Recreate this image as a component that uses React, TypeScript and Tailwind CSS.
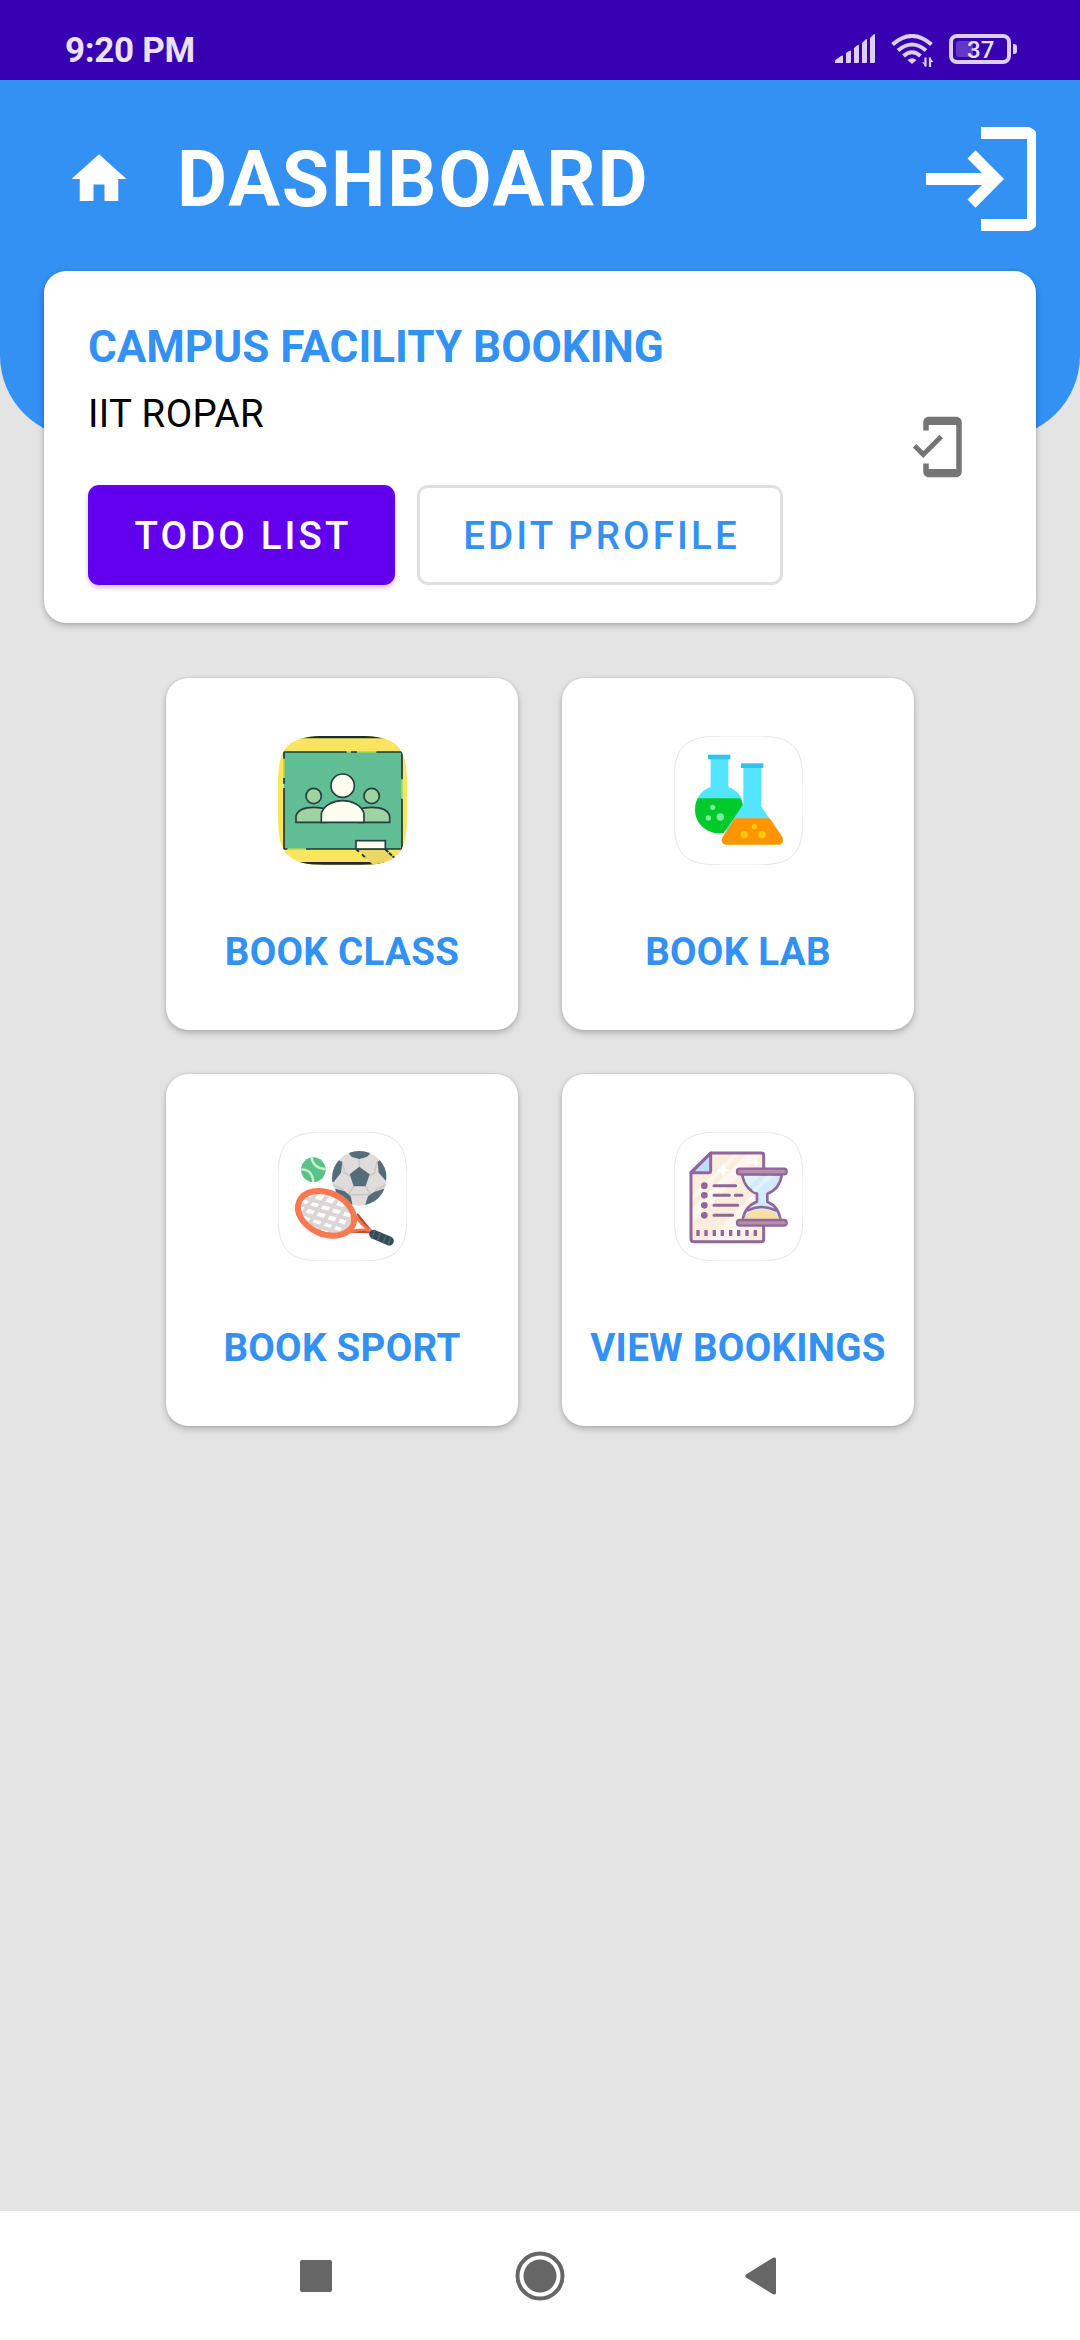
import type { ReactNode } from "react";

const SQUIRCLE =
  "M0 140C0 32 32 0 140 0H247C355 0 387 32 387 140V247C387 355 355 387 247 387H140C32 387 0 355 0 247Z";

function StatusBar() {
  return (
    <header className="flex h-[80px] shrink-0 items-start justify-between bg-[#3700b3] pr-[63px] pl-[65px]">
      <span className="mt-[30px] text-[35px] leading-[41px] font-bold tracking-[-0.3px] text-[#ebe2f9]">9:20 PM</span>
      <div className="mt-[34px] flex items-start text-[#dccff3]">
        <svg width="42" height="30" viewBox="0 0 42 30" fill="currentColor">
          <path d="M0 29V27Q0 26 1 25.4L6 22Q8 21 8 22V29ZM11 29V19L14 17Q16 16 16 17V28Q16 29 15 29ZM19 29V14L22 11.5Q24 10 24 12V28Q24 29 23 29ZM27 29V9L30 6Q32 4 32 6V28Q32 29 31 29ZM35 29V4L38 1Q40 -1 40 1V28Q40 29 39 29Z" />
        </svg>
        <svg className="ml-[14px]" width="44" height="34" viewBox="0 0 44 34" fill="none" stroke="currentColor" strokeWidth="4">
          <path d="M1.5 10.5Q21 -6.500 40.500 10.500" />
          <path d="M7 16.500Q21 4.500 35 16.500" />
          <path d="M12.500 22Q21 14.500 29.500 22" />
          <path d="M16.500 26Q21 22.500 25.500 26L21 30Z" fill="currentColor" stroke="none" />
          <path d="M34.500 23.500V32.500M39 23.500V33" strokeWidth="2.200" />
          <path d="M31 28L35 33V29ZM42.500 28L38.500 23.500V28Z" fill="currentColor" stroke="none" />
        </svg>
        <div className="ml-[14px] flex items-center">
          <div className="flex h-[30px] w-[62px] items-center rounded-[8px] border-4 border-[#dccff3] pl-[3px]">
            <div className="h-[16px] w-[17px] rounded-l-[3px] bg-[#6236c6]" />
            <span className="-ml-[6px] pt-[2px] text-[24px] leading-[24px] font-medium text-[#ebe2f9]">37</span>
          </div>
          <div className="ml-[2px] h-[10px] w-[4px] rounded-r-[3px] bg-[#dccff3]" />
        </div>
      </div>
    </header>
  );
}

function Toolbar() {
  return (
    <div className="-mb-[166.5px] h-[357.5px] shrink-0 rounded-b-[82.5px] bg-[#3291f3]">
      <div className="flex h-[198px] items-center pr-[44px] pl-[66px]">
        <svg width="66" height="66" viewBox="0 0 24 24" fill="white">
          <path d="M10 20v-6h4v6h5v-8h3L12 3 2 12h3v8z" />
        </svg>
        <h1 className="ml-[45px] pt-[2px] text-[77px] leading-[90px] font-bold tracking-[1.9px] text-white">DASHBOARD</h1>
        <svg className="ml-auto" width="110" height="104" viewBox="0 0 110 104" fill="white">
          <path d="M55 0H101C104 0 108 2 110 5V99C108 102 104 104 101 104H55V92H101V12H55Z" />
          <path d="M0 46H56L41.500 31.500L49.500 23.300L78 52L49.500 80.700L41.500 72.500L56 58H0Z" />
        </svg>
      </div>
    </div>
  );
}

function ProfileCard() {
  return (
    <section className="mx-[44px] flex h-[352px] shrink-0 items-start rounded-[22px] bg-white pt-[49px] pr-[66px] pl-[44px] shadow-[0_3px_6px_rgba(0,0,0,0.22),0_0_3px_rgba(0,0,0,0.12)]">
      <div className="flex flex-1 flex-col">
        <h2 className="text-[44px] leading-[54px] font-bold text-[#3291f3]">CAMPUS FACILITY BOOKING</h2>
        <p className="mt-[17px] text-[38.5px] leading-[45px] tracking-[0.35px] text-black">IIT ROPAR</p>
        <div className="mt-[49px] flex gap-[22px]">
          <button className="h-[100px] w-[307px] rounded-[11px] bg-[#6200ee] pt-[2px] pl-[3px] text-[38.5px] font-medium tracking-[3.1px] text-white shadow-[0_3px_5px_rgba(98,0,238,0.25)]">
            TODO LIST
          </button>
          <button className="h-[100px] w-[366px] rounded-[11px] border-[3px] border-[#e0e0e0] pt-[2px] pl-[3px] text-[38.5px] font-medium tracking-[3.1px] text-[#3291f3]">
            EDIT PROFILE
          </button>
        </div>
      </div>
      <svg className="mt-[94px]" width="66" height="66" viewBox="0 0 24 24" fill="#757575">
        <path d="M19 1H9c-1.100 0-2 .9-2 2v3h2V4h10v16H9v-2H7v3c0 1.100.9 2 2 2h10c1.100 0 2-.9 2-2V3c0-1.100-.9-2-2-2zM7.010 13.470l-2.550-2.550-1.270 1.270L7 16l7.190-7.190-1.270-1.270z" />
      </svg>
    </section>
  );
}

function ClassIcon() {
  return (
    <svg width="129" height="129" viewBox="0 0 387 387">
      <defs>
        <clipPath id="class-tile">
          <path d={SQUIRCLE} />
        </clipPath>
      </defs>
      <g clipPath="url(#class-tile)">
        <rect width="387" height="387" fill="#fae55c" />
        <path d="M0 3H387M0 382H387" stroke="#222b2c" strokeWidth="8" />
        <path d="M240 340H322L368 387H285Z" fill="#ecd766" />
        <rect x="18" y="48" width="354" height="291" fill="#61bd93" />
        <g fill="none" stroke="#1e3435" strokeWidth="5">
          <path d="M18 68V48H206M219 48H237M295 48H372V130M372 188V339H84M28 339H18V156M18 143V126" />
          <path d="M322 340L350 366M252 355L263 366M236 341L243 347" strokeWidth="6" strokeDasharray="12 3" />
        </g>
        <path d="M208 48H218M238 48H294M18 70V124M372 132V186M30 339H82" stroke="#a5d75d" strokeWidth="5" />
        <g stroke="#263f40" strokeWidth="5">
          <g fill="#9fd3a1">
            <circle cx="107" cy="180" r="23" />
            <circle cx="281" cy="180" r="23" />
            <path d="M54 259V240C60 218 85 214 107 214Q130 214 145 220V259ZM335 259V240C329 218 303 214 281 214Q258 214 243 220V259Z" />
          </g>
          <g fill="#fffdf0">
            <circle cx="194" cy="149" r="35" />
            <path d="M130 259V232C138 206 168 194 194 194S250 206 258 232V259Z" />
            <rect x="234" y="314" width="88" height="25" />
          </g>
        </g>
      </g>
    </svg>
  );
}

function LabIcon() {
  return (
    <svg width="129" height="129" viewBox="0 0 387 387">
      <path d={SQUIRCLE} fill="white" stroke="#e6e6e6" strokeWidth="3" />
      <path d="M110 66H163V153C190 163 207 180 207 214A71 74 0 1 1 66 200C72 176 90 160 110 153Z" fill="#53e5ff" />
      <path d="M71 187H199L207 206L149 291C104 298 63 266 63 221Q63 203 71 187Z" fill="#00c92c" />
      <rect x="102" y="56" width="67" height="14" fill="#36bfef" />
      <path d="M208 94H261V210L287 248H182L208 206Z" fill="#53e5ff" />
      <rect x="201" y="82" width="67" height="14" fill="#36bfef" />
      <path d="M182 247H287L325 303C331 314 325 326 312 326H158C145 326 139 314 146 303Z" fill="#fd9500" />
      <g fill="#7eed9a">
        <circle cx="116" cy="214" r="8" />
        <circle cx="103" cy="246" r="8" />
        <circle cx="139" cy="243" r="11" />
      </g>
      <g fill="#ffc905">
        <circle cx="241" cy="272" r="8" />
        <circle cx="211" cy="296" r="11" />
        <circle cx="264" cy="296" r="11" />
      </g>
    </svg>
  );
}

function SportIcon() {
  return (
    <svg width="129" height="129" viewBox="0 0 387 387">
      <defs>
        <clipPath id="football">
          <circle cx="244" cy="139" r="82" />
        </clipPath>
        <clipPath id="tennis-ball">
          <circle cx="106" cy="113" r="37" />
        </clipPath>
        <clipPath id="racket-strings">
          <ellipse rx="83" ry="57" transform="translate(145 244) rotate(24)" />
        </clipPath>
      </defs>
      <path d={SQUIRCLE} fill="white" stroke="#e6e6e6" strokeWidth="3" />
      <g clipPath="url(#football)">
        <rect x="160" y="55" width="170" height="170" fill="#e0dcdc" />
        <path
          d="M244 75V104M196 120L217 132M294 120L273 132M228 163L212 186M262 163L278 186M165 158L196 173L205 210M325 158L294 173L285 210M190 88L200 117M298 88L290 117M205 188H285"
          stroke="#cac7c9"
          strokeWidth="5"
          fill="none"
        />
        <path
          d="M244 104L275 127L263 163H227L215 127ZM214 67L222 75L244 81L266 75L275 67V50H214ZM160 85H183L193 90L189 122L167 150L155 150ZM330 85H304L299 90L302 122L324 147ZM172 170L200 178L218 193L225 225H180ZM318 170L288 180L270 193L259 225H315Z"
          fill="#556c7a"
        />
      </g>
      <g clipPath="url(#tennis-ball)">
        <rect x="68" y="75" width="76" height="76" fill="#5dc08b" />
        <path d="M100 75Q106 110 146 112M66 112Q104 110 106 153" stroke="#c2f4cb" strokeWidth="7" fill="none" />
      </g>
      <path d="M222 297L279 299L236 247" fill="none" stroke="#b94d30" strokeWidth="10" />
      <g clipPath="url(#racket-strings)">
        <rect x="50" y="170" width="200" height="150" fill="white" />
        <path
          d="M50 188L240 245M50 212L240 270M50 237L230 294M60 263L210 311M124 170L70 250M153 180L91 280M183 193L119 300M212 210L149 312M240 228L178 320"
          stroke="#dbd5d5"
          strokeWidth="12"
        />
      </g>
      <ellipse rx="88" ry="62" transform="translate(144 244) rotate(24)" fill="none" stroke="#fb7850" strokeWidth="18" />
      <path d="M234 250Q247 279 279 296Q247 289 218 300" fill="none" stroke="#f27451" strokeWidth="8" />
      <path d="M287 307L334 327" stroke="#344b58" strokeWidth="27" strokeLinecap="round" />
      <path d="M291 294L281 320M308 301L298 327M325 309L315 334M338 316L330 340" stroke="#536b78" strokeWidth="4" />
    </svg>
  );
}

function BookingsIcon() {
  return (
    <svg width="129" height="129" viewBox="0 0 387 387">
      <defs>
        <clipPath id="sheet">
          <path d="M51 122L110 63H268V329H51Z" />
        </clipPath>
      </defs>
      <path d={SQUIRCLE} fill="white" stroke="#e6e6e6" strokeWidth="3" />
      <g clipPath="url(#sheet)">
        <rect x="45" y="55" width="230" height="280" fill="#faeddd" />
        <path d="M40 244L221 63H264L40 287ZM94 330L275 149V258L203 330ZM40 205L182 63H198L40 221Z" fill="#fff6f0" />
        <path d="M148 95L154 109L168 115L154 121L148 135L142 121L128 115L142 109ZM246 76L250 86L260 91L250 96L246 106L242 96L232 91L242 86Z" fill="white" />
      </g>
      <g stroke="#8f679a" strokeWidth="9" strokeLinecap="round" strokeLinejoin="round">
        <path d="M51 122L110 63V116Q110 122 104 122Z" fill="#badffb" />
        <path d="M110 63H262Q269 63 269 70V322Q269 329 262 329H59Q51 329 51 321V122Z" fill="none" />
        <path d="M120 161H185M120 190H166M184 190H204M120 220H191M120 250H176" />
      </g>
      <g fill="#8f679a">
        <circle cx="91" cy="161" r="10" />
        <circle cx="91" cy="190" r="10" />
        <circle cx="91" cy="220" r="10" />
        <circle cx="91" cy="250" r="10" />
      </g>
      <path d="M72 294V312M96 294V312M121 294V312M145 294V312M170 294V312M194 294V312M219 294V312M244 294V312" stroke="#8f679a" strokeWidth="10" />
      <g stroke="#8f679a" strokeWidth="8" strokeLinejoin="round">
        <path d="M204 127C210 157 224 177 249 185V209C224 218 210 237 206 264H320C316 237 302 218 280 209V185C305 177 319 157 324 127Z" fill="#d2eafb" />
      </g>
      <path d="M222 131H260L224 163Q213 150 210 131ZM280 131H298L244 181L234 174Z" fill="#e3f3fd" />
      <path d="M210 261C222 223 304 223 316 261Z" fill="#f8dfa5" />
      <path d="M219 236Q263 214 307 236" fill="none" stroke="#8f679a" strokeWidth="8" />
      <g fill="#bb8ba9" stroke="#8f679a" strokeWidth="7">
        <rect x="189" y="110" width="149" height="17" rx="8" />
        <rect x="189" y="264" width="149" height="17" rx="8" />
      </g>
    </svg>
  );
}

function Tile({ icon, label }: { icon: ReactNode; label: string }) {
  return (
    <article className="flex h-[352px] w-[352px] flex-col items-center rounded-[22px] bg-white pt-[58px] shadow-[0_3px_6px_rgba(0,0,0,0.22),0_0_3px_rgba(0,0,0,0.12)]">
      {icon}
      <h3 className="mt-[64px] text-[38.5px] leading-[46px] font-bold tracking-[0.3px] whitespace-nowrap text-[#3291f3]">{label}</h3>
    </article>
  );
}

function NavigationBar() {
  return (
    <nav className="flex h-[129px] shrink-0 items-center justify-between bg-white pr-[304px] pl-[300px]">
      <div className="h-8 w-8 rounded-[2px] bg-[#666666]" />
      <svg className="ml-[3px]" width="50" height="50" viewBox="0 0 50 50" fill="#666666">
        <circle cx="25" cy="25" r="22.500" fill="none" stroke="#666666" strokeWidth="4" />
        <circle cx="25" cy="25" r="16.500" />
      </svg>
      <svg width="31" height="38" viewBox="0 0 31 38" fill="#666666">
        <path d="M1 17.500L28 .8Q31 0 31 2V36Q31 38 28 37.200L1 20.500Q-.5 19 1 17.500Z" />
      </svg>
    </nav>
  );
}

export default function App() {
  return (
    <div className="flex h-[2340px] w-[1080px] flex-col overflow-hidden bg-[#e4e4e4] font-[Roboto,sans-serif]">
      <StatusBar />
      <Toolbar />
      <ProfileCard />
      <main className="mt-[55px] grid flex-1 grid-cols-[352px_352px] content-start justify-center gap-[44px]">
        <Tile icon={<ClassIcon />} label="BOOK CLASS" />
        <Tile icon={<LabIcon />} label="BOOK LAB" />
        <Tile icon={<SportIcon />} label="BOOK SPORT" />
        <Tile icon={<BookingsIcon />} label="VIEW BOOKINGS" />
      </main>
      <NavigationBar />
    </div>
  );
}
